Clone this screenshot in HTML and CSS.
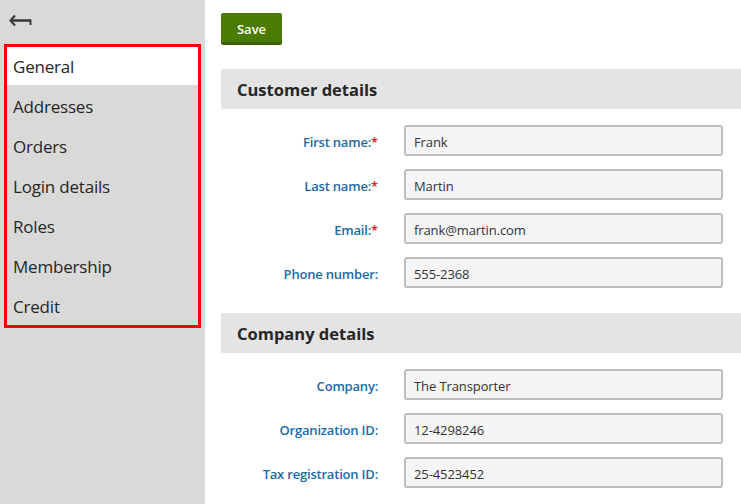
FILE: index.html
```html
<!DOCTYPE html>
<html>
<head>
<meta charset="utf-8">
<link rel="stylesheet" href="styles.css">
</head>
<body>
<div class="page">
  <aside class="sidebar">
    <div class="back">
      <svg width="24" height="14" viewBox="0 0 24 14">
        <path d="M6 1.5 L1.5 6.5 L6 11.5" fill="none" stroke="#3b3b3b" stroke-width="2.2" stroke-linejoin="miter"/>
        <path d="M2 6.5 H22" stroke="#3b3b3b" stroke-width="2.6"/>
        <path d="M21.5 5.5 V11" stroke="#3b3b3b" stroke-width="2"/>
      </svg>
    </div>
    <nav class="nav">
      <div class="nav-item active">General</div>
      <div class="nav-item">Addresses</div>
      <div class="nav-item">Orders</div>
      <div class="nav-item">Login details</div>
      <div class="nav-item">Roles</div>
      <div class="nav-item">Membership</div>
      <div class="nav-item">Credit</div>
    </nav>
    <div class="highlight"></div>
  </aside>
  <main class="content">
    <div class="toolbar"><button class="btn-save">Save</button></div>
    <section class="section">
      <h2 class="section-title">Customer details</h2>
      <div class="rows">
        <div class="row"><label class="lbl">First name:<span class="req">*</span></label><div class="input">Frank</div></div>
        <div class="row"><label class="lbl">Last name:<span class="req">*</span></label><div class="input">Martin</div></div>
        <div class="row"><label class="lbl">Email:<span class="req">*</span></label><div class="input">frank@martin.com</div></div>
        <div class="row"><label class="lbl">Phone number:</label><div class="input">555-2368</div></div>
      </div>
    </section>
    <section class="section">
      <h2 class="section-title">Company details</h2>
      <div class="rows">
        <div class="row"><label class="lbl">Company:</label><div class="input">The Transporter</div></div>
        <div class="row"><label class="lbl">Organization ID:</label><div class="input">12-4298246</div></div>
        <div class="row"><label class="lbl">Tax registration ID:</label><div class="input">25-4523452</div></div>
      </div>
    </section>
  </main>
</div>
</body>
</html>
```

FILE: styles.css
```css
* { box-sizing: border-box; }
html, body { margin: 0; padding: 0; }
body {
  font-family: "Open Sans", "Noto Sans", sans-serif;
  background: #ffffff;
  color: #262626;
  width: 741px;
  height: 504px;
  overflow: hidden;
}
.page {
  display: flex;
  height: 504px;
}
.sidebar {
  position: relative;
  width: 205px;
  flex: none;
  background: #d9dad8;
}
.back {
  height: 45px;
  padding: 14px 0 0 9px;
}
.back svg { display: block; }
.nav {
  margin: 0 4px;
  display: flex;
  flex-direction: column;
}
.nav-item {
  height: 40px;
  line-height: 43px;
  padding-left: 9px;
  font-size: 17px;
  color: #262626;
  letter-spacing: -0.2px;
}
.nav-item.active { background: #ffffff; }
.highlight {
  position: absolute;
  left: 4px;
  top: 44px;
  width: 197px;
  height: 284px;
  border: 3px solid #ff0000;
  pointer-events: none;
}
.content {
  flex: 1;
  padding: 13px 0 0 16px;
}
.toolbar { height: 56px; }
.btn-save {
  display: block;
  width: 61px;
  height: 32px;
  border: none;
  border-bottom: 3px solid #3a6100;
  border-radius: 2px;
  background: #4b7b00;
  color: #ffffff;
  font-family: "Open Sans", sans-serif;
  font-weight: 600;
  font-size: 13px;
  padding: 2px 0 0;
  line-height: 29px;
}
.section { margin-bottom: 25px; }
.section-title {
  margin: 0;
  height: 40px;
  line-height: 42px;
  background: #e4e4e4;
  padding-left: 16px;
  font-size: 16.5px;
  font-weight: 700;
  color: #262626;
}
.rows {
  display: flex;
  flex-direction: column;
  gap: 13px;
  padding-top: 16px;
}
.row {
  display: flex;
  align-items: center;
  height: 31px;
}
.lbl {
  width: 157px;
  text-align: right;
  padding-top: 2px;
  font-size: 13px;
  font-weight: 600;
  color: #1c6aa6;
  letter-spacing: -0.2px;
}
.req { color: #e8202a; }
.input {
  margin-left: 26px;
  width: 319px;
  height: 31px;
  border: 2px solid #bdbdbd;
  border-radius: 3px;
  background: #f5f5f5;
  padding: 2px 0 0 8px;
  line-height: 27px;
  font-size: 13px;
  color: #333333;
  letter-spacing: -0.1px;
}
```
